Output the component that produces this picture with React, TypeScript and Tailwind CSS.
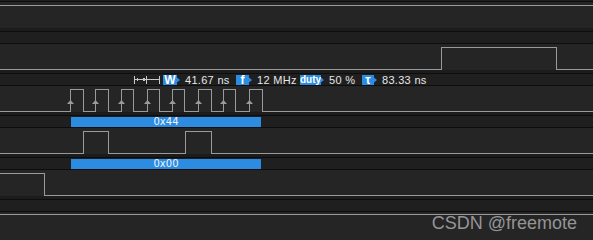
import React from "react";

const W = 593;
const GRAY = "#9a9a9a";

type Sig = { start: 0 | 1; edges: number[] };

function wavePoints(sig: Sig) {
  const y = (v: number) => (v ? 3.5 : 25.5);
  let cur = sig.start;
  const pts: string[] = [`0,${y(cur)}`];
  for (const x of sig.edges) {
    pts.push(`${x + 0.5},${y(cur)}`);
    cur = (cur ? 0 : 1) as 0 | 1;
    pts.push(`${x + 0.5},${y(cur)}`);
  }
  pts.push(`${W},${y(cur)}`);
  return pts.join(" ");
}

function Wave({ sig, arrows }: { sig: Sig; arrows?: number[] }) {
  return (
    <svg className="absolute inset-0" width={W} height={29} viewBox={`0 0 ${W} 29`}>
      <polyline points={wavePoints(sig)} fill="none" stroke={GRAY} strokeWidth={1} shapeRendering="crispEdges" />
      {arrows?.map((x) => (
        <polygon key={x} points={`${x + 0.5},14 ${x - 3},18 ${x + 4},18`} fill={GRAY} />
      ))}
    </svg>
  );
}

function Channel({ sig, arrows, band }: { sig: Sig; arrows?: number[]; band?: React.ReactNode }) {
  return (
    <div className="flex flex-col">
      <div className="h-px bg-[#0d0d0d]" />
      <div className="relative h-[29px]">
        <div className="h-[26px] bg-[#252525]" />
        <div className="h-[3px] bg-[#1c1c1c]" />
        <Wave sig={sig} arrows={arrows} />
      </div>
      <div className="h-px bg-[#0d0d0d]" />
      <div className="h-[11px] bg-[#1f1f1f]">{band}</div>
    </div>
  );
}

function DecodeBar({ label }: { label: string }) {
  return (
    <div className="flex pl-[71px] pt-px">
      <div className="flex h-[10px] w-[190px] items-center justify-center bg-[#2b8ce2] font-['DejaVu_Sans',sans-serif] text-[10px] leading-[10px] text-[#eef4fc]">
        {label}
      </div>
    </div>
  );
}

const badgeClip =
  "[clip-path:polygon(0_0,calc(100%_-_3px)_0,calc(100%_-_3px)_25%,100%_50%,calc(100%_-_3px)_75%,calc(100%_-_3px)_100%,0_100%)]";

function Badge({ children, w }: { children: React.ReactNode; w: string }) {
  return (
    <div
      className={`flex h-[10px] items-center justify-center bg-[#2b8ce2] pr-[3px] font-['Liberation_Sans',sans-serif] font-bold leading-[10px] text-white ${badgeClip} ${w}`}
    >
      {children}
    </div>
  );
}

function Val({ children, w }: { children: React.ReactNode; w: string }) {
  return (
    <div className={`h-[10px] font-['Liberation_Sans',sans-serif] text-[11px] leading-[10px] tracking-[0.3px] whitespace-nowrap text-[#e6e6e6] ${w}`}>
      {children}
    </div>
  );
}

function Measure() {
  return (
    <div className="flex pl-[134px] pt-px">
      <div className="w-[29px] pt-px">
        <svg width="26" height="8" viewBox="0 0 26 8" shapeRendering="crispEdges">
          <g stroke="#c8c8c8" strokeWidth="1" fill="none">
            <line x1="0.5" y1="0" x2="0.5" y2="8" />
            <line x1="12.5" y1="0" x2="12.5" y2="8" />
            <line x1="25.5" y1="0" x2="25.5" y2="8" />
            <line x1="1" y1="3.5" x2="25" y2="3.5" />
          </g>
          <polygon points="1,3.5 4,1.5 4,5.5" fill="#c8c8c8" />
          <polygon points="12,3.5 9,1.5 9,5.5" fill="#c8c8c8" />
        </svg>
      </div>
      <Badge w="w-[17px] text-[12px]">W</Badge>
      <div className="w-[5px]" />
      <Val w="w-[51px]">41.67 ns</Val>
      <Badge w="w-[16px] text-[12px]">f</Badge>
      <div className="w-[5px]" />
      <Val w="w-[43px]">12 MHz</Val>
      <Badge w="w-[24px] text-[10px]">duty</Badge>
      <div className="w-[5px]" />
      <Val w="w-[33px]">50 %</Val>
      <Badge w="w-[15px] text-[12px]">τ</Badge>
      <div className="w-[5px]" />
      <Val w="w-[50px]">83.33 ns</Val>
    </div>
  );
}

export default function App() {
  const clkRise = [70, 95, 121, 147, 172, 198, 223, 249];
  const clkFall = [83, 108, 133, 159, 184, 211, 235, 262];
  const clkEdges: number[] = [];
  clkRise.forEach((r, i) => clkEdges.push(r, clkFall[i]));

  return (
    <div className="relative h-[240px] w-[593px] overflow-hidden bg-[#1f1f1f]">
      <div className="h-px bg-[#1f1f1f]" />
      <Channel sig={{ start: 1, edges: [] }} />
      <Channel sig={{ start: 0, edges: [441, 556] }} band={<Measure />} />
      <Channel sig={{ start: 0, edges: clkEdges }} arrows={clkRise} band={<DecodeBar label="0x44" />} />
      <Channel sig={{ start: 0, edges: [83, 108, 185, 211] }} band={<DecodeBar label="0x00" />} />
      <Channel sig={{ start: 1, edges: [44] }} />
      <div className="flex flex-col">
        <div className="h-px bg-[#0d0d0d]" />
        <div className="relative h-[28px] bg-[#252525]">
          <svg className="absolute inset-0" width={W} height={28}>
            <line x1="0" y1="2.5" x2={W} y2="2.5" stroke={GRAY} strokeWidth="1" shapeRendering="crispEdges" />
          </svg>
        </div>
      </div>
      <div className="absolute right-[16px] top-[214px] font-['Liberation_Sans',sans-serif] text-[18px] leading-[18px] text-[#b4b4b4]/80">
        CSDN @freemote
      </div>
    </div>
  );
}
